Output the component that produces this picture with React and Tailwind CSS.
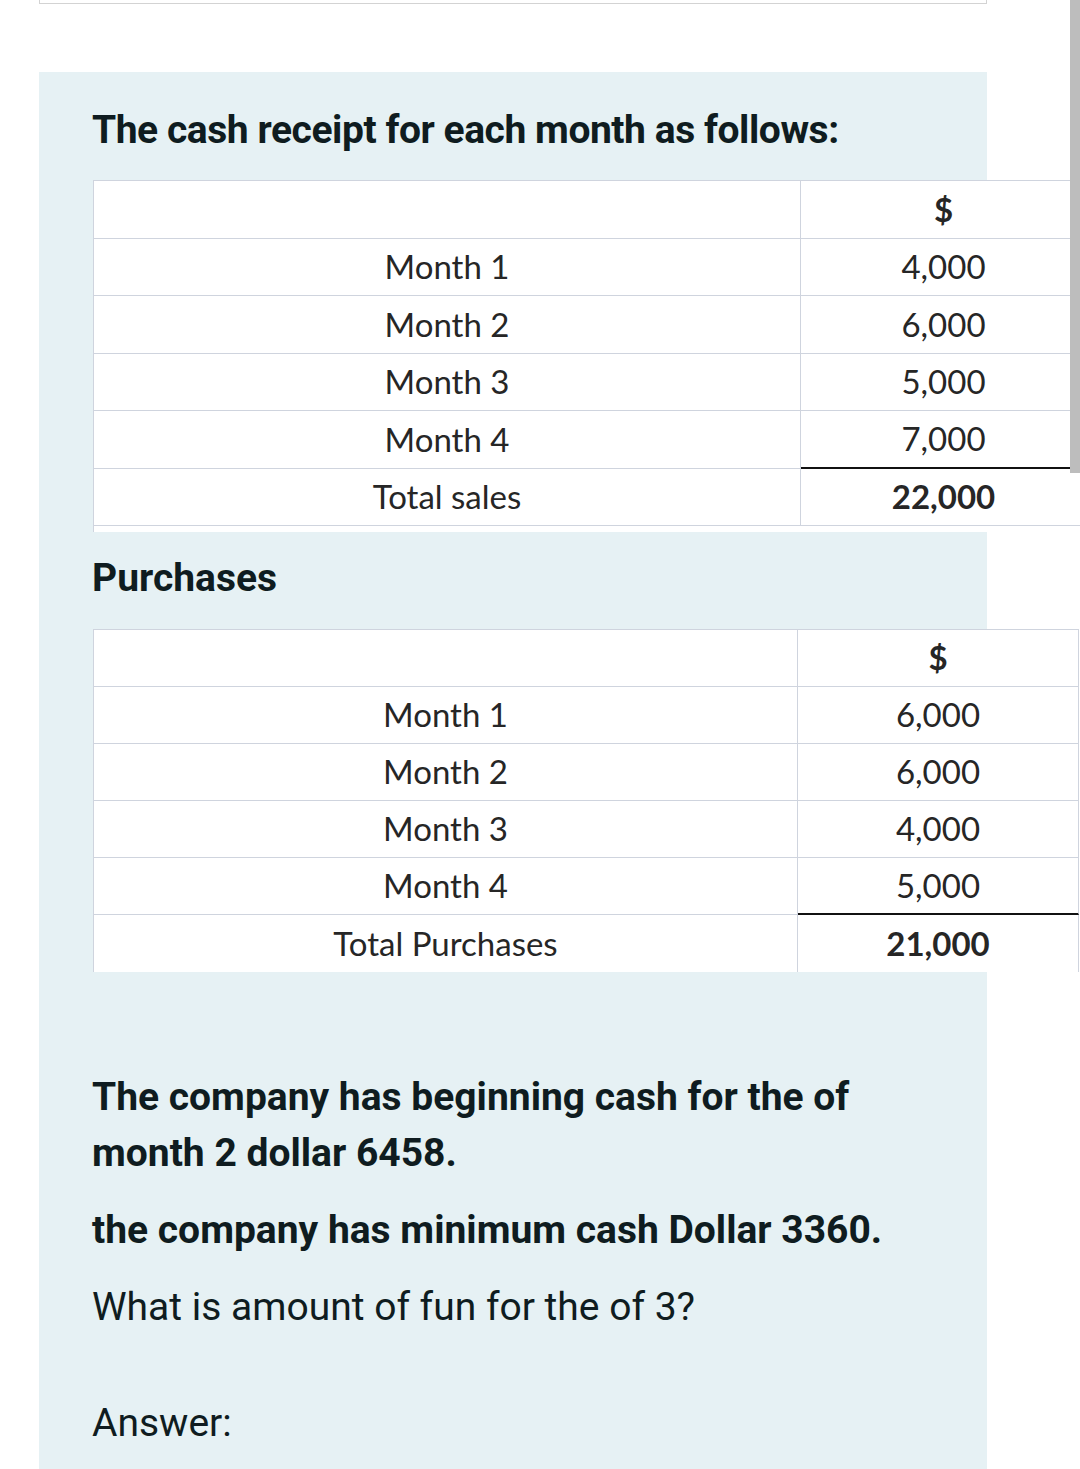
import React from "react";

const cellFont = { fontFamily: "Lato, 'Open Sans', sans-serif" };

function Table({ rows, col1, width, rowH, rightBorder, bottomPad, lastNoBorder }) {
  return (
    <div
      className={`ml-[1px] bg-white border-l border-t border-[#cfd4de] ${bottomPad ? "pb-[6px]" : ""}`}
      style={{ width }}
    >
      {rows.map((r, i) => {
        const isLast = i === rows.length - 1;
        const isBeforeTotal = i === rows.length - 2;
        return (
          <div key={i} className="flex" style={{ height: rowH }}>
            <div
              className={`flex items-center justify-center border-r border-[#cfd4de] ${isLast && lastNoBorder ? "" : "border-b"} text-[33px] text-[#262626]`}
              style={{ ...cellFont, width: col1 }}
            >
              {r[0]}
            </div>
            <div
              className={`flex-1 flex items-center justify-center text-[33px] text-[#262626] ${rightBorder ? "border-r border-[#cfd4de]" : ""} ${isBeforeTotal ? "border-b-2 border-b-[#111]" : isLast && lastNoBorder ? "" : "border-b border-b-[#cfd4de]"} ${isLast || i === 0 ? "font-bold" : ""}`}
              style={cellFont}
            >
              {r[1]}
            </div>
          </div>
        );
      })}
    </div>
  );
}

export default function App() {
  const sales = [
    ["", "$"],
    ["Month 1", "4,000"],
    ["Month 2", "6,000"],
    ["Month 3", "5,000"],
    ["Month 4", "7,000"],
    ["Total sales", "22,000"],
  ];
  const purchases = [
    ["", "$"],
    ["Month 1", "6,000"],
    ["Month 2", "6,000"],
    ["Month 3", "4,000"],
    ["Month 4", "5,000"],
    ["Total Purchases", "21,000"],
  ];
  return (
    <div
      className="relative w-[1080px] h-[1469px] bg-white overflow-hidden flex flex-col"
      style={{ fontFamily: "Roboto, 'Liberation Sans', sans-serif" }}
    >
      <div className="ml-[39px] w-[948px] h-[4px] border-x border-b border-[#d3d3d3]" />
      <div className="ml-[39px] mt-[68px] w-[948px] flex-1 bg-[#e6f1f4] pl-[53px] pt-[30px] text-[#0f1c20]">
        <h2 className="text-[39px] leading-[56px] font-bold tracking-[-0.45px]">
          The cash receipt for each month as follows:
        </h2>
        <div className="mt-[22px]">
          <Table rows={sales} col1="707px" width="993px" rowH="57.5px" bottomPad />
        </div>
        <h2 className="mt-[18px] text-[39px] leading-[56px] font-bold">Purchases</h2>
        <div className="mt-[23px]">
          <Table rows={purchases} col1="704px" width="986px" rowH="57px" rightBorder lastNoBorder />
        </div>
        <p className="mt-[97px] text-[39px] leading-[56px] font-bold w-[800px]">
          The company has beginning cash for the of month 2 dollar 6458.
        </p>
        <p className="mt-[21px] text-[39px] leading-[56px] font-bold">
          the company has minimum cash Dollar 3360.
        </p>
        <p className="mt-[21px] text-[39px] leading-[56px]">What is amount of fun for the of 3?</p>
        <p className="mt-[60px] text-[39px] leading-[56px]">Answer:</p>
      </div>
      <div className="absolute right-0 top-0 w-[10px] h-[473px] bg-[#bdbdbd]" />
    </div>
  );
}
